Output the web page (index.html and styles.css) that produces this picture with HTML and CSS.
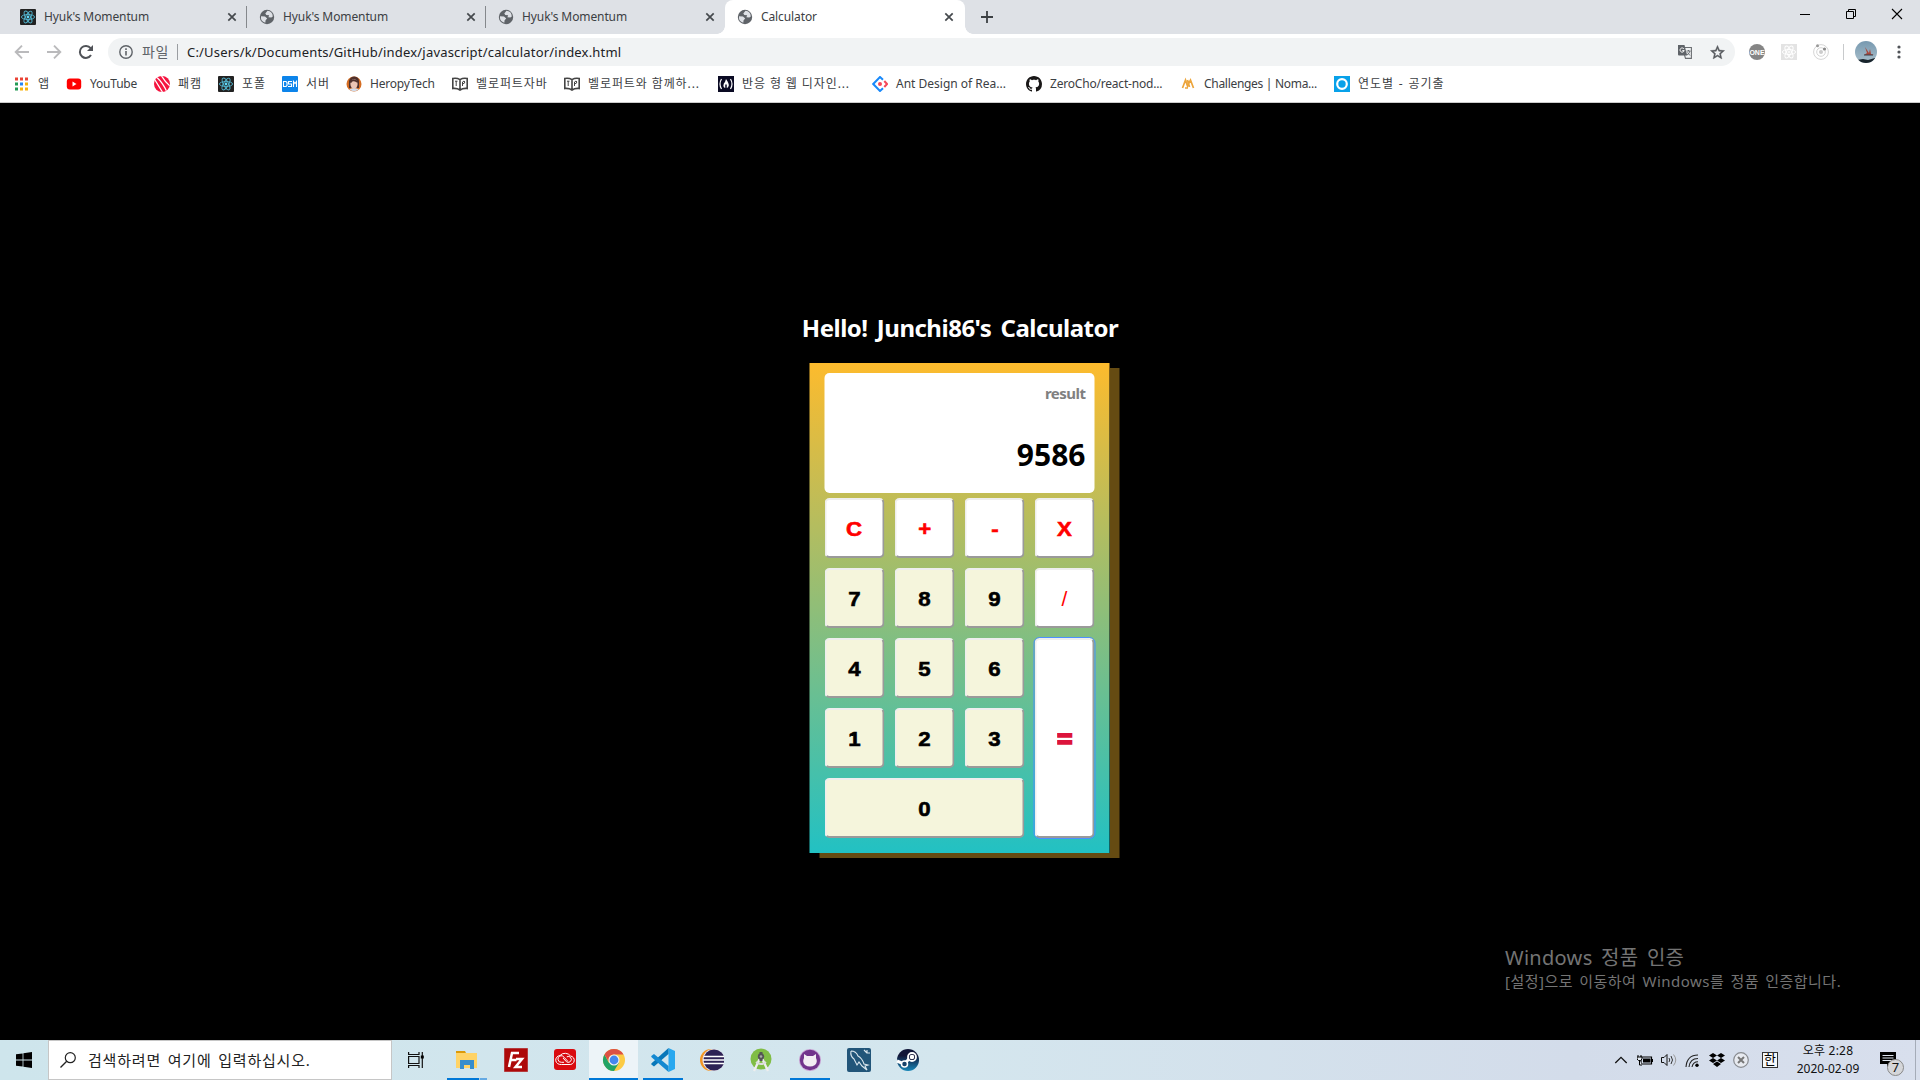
FILE: index.html
```html
<!DOCTYPE html>
<html lang="ko">
<head>
<meta charset="utf-8">
<title>Calculator</title>
<link rel="stylesheet" href="styles.css">
</head>
<body>
<svg class="defs" aria-hidden="true">
  <symbol id="globe" viewBox="0 0 16 16"><circle cx="8" cy="8" r="7.200" fill="#5f6368"/><path d="M8.500 1.800 6.300 4.400 7.300 6 10.200 6.200 9.400 8.200 12.300 8.600 13.800 7.400A6 6 0 0 0 8.500 1.800ZM2 7.200 6 7.500 8.200 9.600 6.600 11.200 6.300 13.700A6 6 0 0 1 2 7.200Z" fill="#dee1e6"/></symbol>
  <symbol id="close" viewBox="0 0 10 10"><path d="M1.300 1.300 8.700 8.700M8.700 1.300 1.300 8.700" stroke="#45494d" stroke-width="1.700"/></symbol>
  <symbol id="react" viewBox="0 0 16 16"><rect width="16" height="16" rx="1" fill="#222"/><g fill="none" stroke="#52b5cf" stroke-width=".9"><ellipse cx="8" cy="8" rx="6.600" ry="2.500"/><ellipse cx="8" cy="8" rx="6.600" ry="2.500" transform="rotate(60 8 8)"/><ellipse cx="8" cy="8" rx="6.600" ry="2.500" transform="rotate(120 8 8)"/></g><circle cx="8" cy="8" r="1.400" fill="#61dafb"/></symbol>
  <symbol id="book" viewBox="0 0 16 16"><path d="M.8 2.500Q5 1.800 8 3.600 11 1.800 15.200 2.500V12.500Q11 12 8 14 5 12 .8 12.500ZM8 3.600V14" fill="none" stroke="#444" stroke-width="1.600"/><path d="M3 5.200h2.500M4.200 5v5M10.500 10V6q2-2 2.300 0 0 1.600-2 1.800" fill="none" stroke="#444"/></symbol>
</svg>

<header class="tabs">
  <div class="tab"><svg class="fav"><use href="#react"/></svg><span class="tab-title">Hyuk's Momentum</span><svg class="x"><use href="#close"/></svg></div>
  <div class="tab"><svg class="fav"><use href="#globe"/></svg><span class="tab-title">Hyuk's Momentum</span><svg class="x"><use href="#close"/></svg></div>
  <div class="tab last"><svg class="fav"><use href="#globe"/></svg><span class="tab-title">Hyuk's Momentum</span><svg class="x"><use href="#close"/></svg></div>
  <div class="tab active"><svg class="fav"><use href="#globe"/></svg><span class="tab-title">Calculator</span><svg class="x"><use href="#close"/></svg></div>
  <svg class="plus" viewBox="0 0 12 12"><path d="M6 0V12M0 6H12" stroke="#3c4043" stroke-width="1.800"/></svg>
  <div class="window-buttons">
    <svg viewBox="0 0 12 12"><path d="M1 6.500H11" stroke="#000"/></svg>
    <svg viewBox="0 0 12 12"><path d="M1.500 3.500H8.500V10.500H1.500ZM3.500 3.500V1.500H10.500V8.500H8.500" fill="none" stroke="#000"/></svg>
    <svg viewBox="0 0 12 12"><path d="M1 1 11 11M11 1 1 11" stroke="#000" stroke-width="1.100"/></svg>
  </div>
</header>

<nav class="toolbar">
  <div class="nav-icons">
    <svg viewBox="0 0 16 16"><path d="M15 8H2M8 1.700 1.700 8 8 14.300" fill="none" stroke="#bababc" stroke-width="1.900"/></svg>
    <svg viewBox="0 0 16 16"><path d="M1 8H14M8 1.700 14.300 8 8 14.300" fill="none" stroke="#bababc" stroke-width="1.900"/></svg>
    <svg viewBox="0 0 16 16"><path d="M13 11A6 6 0 1 1 12.600 4.200" fill="none" stroke="#505358" stroke-width="2"/><path d="M15 1V7H9Z" fill="#505358"/></svg>
  </div>
  <div class="omnibox">
    <svg class="info" viewBox="0 0 14 14"><circle cx="7" cy="7" r="6.200" fill="none" stroke="#5f6368" stroke-width="1.400"/><path d="M7 6V10.500M7 3.300V4.900" stroke="#5f6368" stroke-width="1.600"/></svg>
    <span class="scheme">파일</span>
    <span class="url">C:/Users/k/Documents/GitHub/index/javascript/calculator/index.html</span>
    <svg class="translate" viewBox="0 0 14 14"><path d="M5 2.500H13.400V13.400H7.500L6.500 10" fill="none" stroke="#6b6e72" stroke-width="1.100"/><path d="M0 0H6.500L9.200 10.500H1Q0 10.500 0 9.500Z" fill="#5f6368"/><path d="M6 4A2.100 2.100 0 1 0 6.200 5.600H4.300" fill="none" stroke="#fff"/><path d="M8.500 6H12.500M10.500 5V6M12 6Q11 9 9 10M9.500 7.500 12 10.500" fill="none" stroke="#5f6368" stroke-width=".9"/></svg>
    <svg class="star" viewBox="0 0 24 24"><path d="M22 9.240l-7.190-.62L12 2 9.190 8.630 2 9.240l5.460 4.730L5.820 21 12 17.270 18.180 21l-1.630-7.030L22 9.240zM12 15.400l-3.760 2.270 1-4.280-3.320-2.880 4.380-.38L12 6.100l1.710 4.040 4.380.38-3.320 2.880 1 4.280L12 15.400z" fill="#55585c" stroke="#55585c" stroke-width=".6"/></svg>
  </div>
  <div class="extensions">
    <svg viewBox="0 0 16 16"><circle cx="8" cy="8" r="8" fill="#858585"/><text x="8" y="11" text-anchor="middle" class="one">ONE</text></svg>
    <svg viewBox="0 0 16 16"><rect width="16" height="16" fill="#e3e3e3"/><g fill="none" stroke="#fff" stroke-width="1"><ellipse cx="8" cy="8" rx="6.600" ry="2.500"/><ellipse cx="8" cy="8" rx="6.600" ry="2.500" transform="rotate(60 8 8)"/><ellipse cx="8" cy="8" rx="6.600" ry="2.500" transform="rotate(120 8 8)"/><circle cx="8" cy="8" r="1"/></g></svg>
    <svg viewBox="0 0 16 16"><g fill="none" stroke="#d5d5d5"><circle cx="8" cy="8" r="7.400"/><circle cx="8" cy="8" r="4.300"/></g><circle cx="8" cy="8" r="2" fill="#ccc"/><circle cx="4.500" cy="1.800" r="1.500" fill="#999"/><circle cx="11.500" cy="5" r="1.600" fill="#888"/></svg>
  </div>
  <svg class="avatar" viewBox="0 0 22 22"><defs><clipPath id="round"><circle cx="11" cy="11" r="11"/></clipPath><linearGradient id="sky" x2="0" y2="1"><stop offset="0" stop-color="#7799b0"/><stop offset="1" stop-color="#a9bfcb"/></linearGradient></defs><g clip-path="url(#round)"><rect width="22" height="22" fill="url(#sky)"/><path d="M10 6 14 12 15 8 16 13 19 14H9L12 12Z" fill="#a8463b"/><path d="M9 14H18" stroke="#39414a"/><path d="M2 19 8 18 13 19 20 17V22H2Z" fill="#18232b"/></g></svg>
  <svg class="dots" viewBox="0 0 4 14"><g fill="#505358"><circle cx="2" cy="2" r="1.600"/><circle cx="2" cy="7" r="1.600"/><circle cx="2" cy="12" r="1.600"/></g></svg>
</nav>

<nav class="bookmarks">
  <a><svg viewBox="0 0 16 16"><g fill="#ea4335"><path d="M1 1.500h3v3H1zM6 1.500h3v3H6zM11 1.500h3v3h-3z"/></g><path d="M1 6.500h3v3H1zM1 11.500h3v3H1z" fill="#249a55"/><path d="M6 6.500h3v3H6z" fill="#2585f5"/><path d="M11 6.500h3v3h-3zM6 11.500h3v3H6zM11 11.500h3v3h-3z" fill="#f8b20b"/></svg><span class="ko">앱</span></a>
  <a><svg viewBox="0 0 16 16"><rect x=".8" y="2.500" width="14.400" height="11" rx="3" fill="#f00"/><path d="M6.500 5.500V10.500L10.500 8Z" fill="#fff"/></svg><span class="en">YouTube</span></a>
  <a><svg viewBox="0 0 16 16"><defs><clipPath id="disc"><circle cx="8" cy="8" r="8"/></clipPath></defs><circle cx="8" cy="8" r="8" fill="#f5143f"/><path d="M1 4 9 17M3 1.500Q9 7 13 16M7 -1Q11 6 16 10" fill="none" stroke="#fff" stroke-width="1.300" clip-path="url(#disc)"/></svg><span class="ko">패캠</span></a>
  <a><svg><use href="#react"/></svg><span class="ko">포폴</span></a>
  <a><svg viewBox="0 0 16 16"><rect width="16" height="16" rx="1" fill="#0c84ea"/><path d="M1.500 5.500H4L5 6.500V9.500L4 10.500H1.500ZM10 5.500H6.500V8H9.500V10.500H6M11.500 11V5.500L13 7.500 14.500 5.500V11" fill="none" stroke="#fff" stroke-width="1.100"/></svg><span class="ko">서버</span></a>
  <a><svg viewBox="0 0 16 16"><circle cx="8" cy="8" r="7.500" fill="#d56d22"/><path d="M3 12V5Q4 .5 8.500.5 13 1 13 5V12Z" fill="#50312c"/><ellipse cx="8" cy="8" rx="3.600" ry="4.800" fill="#ecc5b5"/><path d="M3 13.500Q8 11 13 13.500 8 17 3 13.500" fill="#d2dceb"/><path d="M4.300 6.500Q6 2.500 11.800 6" stroke="#50312c" stroke-width="2" fill="none"/></svg><span class="en">HeropyTech</span></a>
  <a><svg><use href="#book"/></svg><span class="ko">벨로퍼트자바</span></a>
  <a><svg><use href="#book"/></svg><span class="ko">벨로퍼트와 함께하...</span></a>
  <a><svg viewBox="0 0 16 16"><rect width="16" height="16" fill="#0a0a23"/><path d="M3.500 3Q.5 8 3.500 13M12.500 3Q15.500 8 12.500 13" fill="none" stroke="#fff" stroke-width="1.200"/><path d="M8 3Q11 7 10.800 9.500 10.500 12 8 12 5.400 12 5.400 9.500 5.500 7 7 6Z" fill="#fff"/><path d="M8 8.500V12" stroke="#0a0a23" stroke-width="1.500"/></svg><span class="ko">반응 형 웹 디자인...</span></a>
  <a><svg viewBox="0 0 16 16"><path d="M11 3.800 8 1 1.200 8 8 15 11 12.200" fill="none" stroke="#1989fa" stroke-width="2"/><path d="M12.300 5 15 8 12.300 11" fill="none" stroke="#f5495a" stroke-width="2"/><circle cx="8" cy="8" r="2" fill="#f5495a"/></svg><span class="en ant">Ant Design of Rea...</span></a>
  <a><svg viewBox="0 0 16 16"><path fill="#191717" d="M8 0C3.580 0 0 3.580 0 8c0 3.540 2.290 6.530 5.470 7.590.4.070.55-.17.55-.38 0-.19-.01-.82-.01-1.490-2.010.37-2.530-.49-2.690-.94-.09-.23-.48-.94-.82-1.130-.28-.15-.68-.52-.01-.53.63-.01 1.080.58 1.230.82.72 1.210 1.870.87 2.330.66.07-.52.28-.87.51-1.070-1.780-.2-3.640-.89-3.640-3.950 0-.87.31-1.590.82-2.150-.08-.2-.36-1.020.08-2.120 0 0 .67-.21 2.200.82.64-.18 1.320-.27 2-.27s1.360.09 2 .27c1.530-1.040 2.200-.82 2.200-.82.44 1.100.16 1.920.08 2.120.51.56.82 1.270.82 2.150 0 3.070-1.870 3.750-3.650 3.950.29.25.54.73.54 1.480 0 1.070-.01 1.930-.01 2.200 0 .21.15.46.55.38A8.010 8.010 0 0 0 16 8c0-4.420-3.580-8-8-8z"/></svg><span class="en">ZeroCho/react-nod...</span></a>
  <a><svg viewBox="0 0 16 16"><path d="M2.500 12 5.500 4 7.500 10 10.500 4 13.500 12M7.500 4 9.500 11M5 12H8" fill="none" stroke="#eca53c" stroke-width="1.700"/></svg><span class="en noma">Challenges | Noma...</span></a>
  <a><svg viewBox="0 0 16 16"><rect width="16" height="16" fill="#08a1e9"/><circle cx="8" cy="8" r="4.800" fill="none" stroke="#fff" stroke-width="2.200"/></svg><span class="ko year">연도별 - 공기출</span></a>
</nav>

<main class="page">
  <h1 class="greeting">Hello! Junchi86's Calculator</h1>
  <section class="calculator">
    <div class="display"><span class="label">result</span><span class="value">9586</span></div>
    <div class="keys">
      <button class="key op"><span>C</span></button><button class="key op"><span>+</span></button><button class="key op"><span>-</span></button><button class="key op"><span>X</span></button>
      <button class="key"><span>7</span></button><button class="key"><span>8</span></button><button class="key"><span>9</span></button><button class="key op slash"><span>/</span></button>
      <button class="key"><span>4</span></button><button class="key"><span>5</span></button><button class="key"><span>6</span></button><button class="key op equals"><span>=</span></button>
      <button class="key"><span>1</span></button><button class="key"><span>2</span></button><button class="key"><span>3</span></button>
      <button class="key zero"><span>0</span></button>
    </div>
  </section>
  <aside class="activation"><p class="act-title">Windows 정품 인증</p><p class="act-text">[설정]으로 이동하여 Windows를 정품 인증합니다.</p></aside>
</main>

<footer class="taskbar">
  <div class="start"><svg viewBox="0 0 16 16"><path d="M0 2.300 6.600 1.400V7.600H0ZM7.400 1.300 16 0V7.600H7.400ZM0 8.400H6.600V14.600L0 13.700ZM7.400 8.400H16V16L7.400 14.700Z"/></svg></div>
  <div class="search"><svg viewBox="0 0 16 16"><circle cx="10.300" cy="5.700" r="5" fill="none" stroke="#222" stroke-width="1.200"/><path d="M6.700 9.300.5 15.500" stroke="#222" stroke-width="1.300"/></svg><span>검색하려면 여기에 입력하십시오.</span></div>
  <div class="taskview"><svg viewBox="0 0 16 16"><g fill="none" stroke="#111" stroke-width="1.200"><path d="M.6 4.500H11V11.500H.6ZM.6 0V2.500H11V0M.6 16V13.500H11V16M14.300 0V16"/></g><path d="M12.800 3.500h3v3h-3z"/></svg></div>
  <div class="apps">
    <div class="app explorer"><svg viewBox="0 0 24 24"><path d="M1 3H10L11 5H1Z" fill="#dc9a09"/><path d="M1 5H22V20H1Z" fill="#ffd366"/><path d="M5 12H19V21H15V17H9V21H5Z" fill="#368dcc"/></svg></div>
    <div class="app"><svg viewBox="0 0 24 24"><rect x=".5" y=".5" width="23" height="23" fill="#ad0909" stroke="#a00" stroke-dasharray="1 1"/><path d="M5 19 8 5H15M6.500 12H12.500M12 11H18L11.500 19H18" fill="none" stroke="#fff" stroke-width="2.500"/></svg></div>
    <div class="app"><svg viewBox="0 0 24 24"><rect x="1" y="1" width="22" height="21" rx="3" fill="#d90b0f"/><g fill="none" stroke="#fff" stroke-width="1"><path d="M8.500 16.500A5 4.500 0 0 1 7 7.500 6.500 6 0 0 1 17.500 8 4.500 4.300 0 0 1 16 16.500Z"/><path d="M15 13.500 11 9.200A3.300 3.300 0 1 0 8.500 14.300H11M10 10 13.500 13.800A3 3 0 1 0 13.800 8.800"/></g></svg></div>
    <div class="app current open"><svg viewBox="0 0 24 24"><circle cx="12" cy="12" r="11" fill="#fccb45"/><path d="M12 12 7 15 2.470 6.500A11 11 0 0 0 12 23L17 14.700Z" fill="#21a366"/><path d="M12 1A11 11 0 0 1 21.530 6.500H12A5.500 5.500 0 0 0 7.200 14.700L2.470 6.500A11 11 0 0 1 12 1" fill="#dd5144"/><circle cx="12" cy="12" r="5.500" fill="#f3f3f3"/><circle cx="12" cy="12" r="4.400" fill="#4587ee"/></svg></div>
    <div class="app open"><svg viewBox="0 0 24 24"><path d="M17.500 0 24 3V21L17.500 24V0Z" fill="#29a8ef"/><path d="M17.500 0V6L3 18.500 .3 16.500V15.500Z" fill="#0877b9"/><path d="M17.500 24V18L3 6 .3 8V9Z" fill="#1489d1"/></svg></div>
    <div class="app"><svg viewBox="0 0 24 24"><circle cx="11" cy="12" r="11" fill="#f49623"/><circle cx="13.500" cy="12" r="11" fill="#e9e2ef"/><circle cx="14" cy="12" r="10.500" fill="#2d2255"/><path d="M4 8.500H24M3 12H24M4 15.500H24" stroke="#fff" stroke-width="1.600"/></svg></div>
    <div class="app"><svg viewBox="0 0 24 24"><circle cx="12" cy="11" r="10.500" fill="#80bd45"/><path d="M12 8 5 23M12 8 19 23" stroke="#eee" stroke-width="2.300"/><path d="M7 14Q12 18 17 14" fill="none" stroke="#ddd" stroke-width="2"/><path d="M12 4V13" stroke="#555" stroke-width="3"/><circle cx="12" cy="8.500" r="3.200" fill="#555"/><circle cx="12" cy="8.500" r="1.300" fill="#aaa"/></svg></div>
    <div class="app open"><svg viewBox="0 0 24 24"><circle cx="12" cy="12" r="11" fill="#c9a7d5"/><circle cx="12" cy="12" r="10.200" fill="#71348c"/><path d="M6 6 9 8H15L18 6V10Q20 14 17 17 12 20 7 17 4 14 6 10Z" fill="#f2edf3"/></svg></div>
    <div class="app"><svg viewBox="0 0 24 24"><rect width="24" height="24" rx="2" fill="#225579"/><path d="M4 3Q9 3 11 8 15 10 17 16L21 17 18 18 20 22 15 18 12 14 10 17 7 11Q3 8 4 3M17 2 20 5M20 2V5H23" fill="none" stroke="#dce8ef" stroke-width="1.100"/></svg></div>
    <div class="app"><svg viewBox="0 0 24 24"><defs><linearGradient id="steam" x2="0" y2="1"><stop offset=".3" stop-color="#111638"/><stop offset="1" stop-color="#1887b8"/></linearGradient></defs><circle cx="12" cy="12" r="11" fill="url(#steam)"/><path d="M1 13 8 16 12 12 15 8" fill="none" stroke="#fff" stroke-width="3"/><circle cx="16" cy="9" r="4" fill="#111638" stroke="#fff" stroke-width="1.800"/><circle cx="16" cy="9" r="2.300" fill="#fff"/><circle cx="8.500" cy="16" r="3" fill="#17426a" stroke="#fff" stroke-width="1.500"/></svg></div>
  </div>
  <div class="tray">
    <svg viewBox="0 0 16 16"><path d="M2.300 11 8 5.300 13.700 11" fill="none" stroke="#111" stroke-width="1.300"/></svg>
    <svg viewBox="0 0 16 16"><path d="M4 5H14.500V12H4ZM15.500 7V10" fill="none" stroke="#000" stroke-width="1.200"/><path d="M6 6.500H13.500V10.500H6Z"/><path d="M1 3V5M4 3V5M0 5H5V7L3.500 8.500H1.500L0 7ZM2.500 8V13H5" fill="#e5ebf2" stroke="#000"/></svg>
    <svg viewBox="0 0 16 16"><path d="M.5 5.500H3L6 2.500V13.500L3 10.500H.5Z" fill="none" stroke="#111"/><path d="M8 6Q9.500 8 8 10M10 4Q13 8 10 12" fill="none" stroke="#333"/><path d="M12.500 2.500Q17 8 12.500 13.500" fill="none" stroke="#999"/></svg>
    <svg viewBox="0 0 16 16"><path d="M1 15Q2 3 13 3M4 15Q5 6.500 13 6.500M7 15Q8 9.800 13 9.800" fill="none" stroke="#222" stroke-width="1.100"/><circle cx="12" cy="13.300" r="1.700"/></svg>
    <svg viewBox="0 0 16 16"><path d="M4 1 8 3.500 4 6 0 3.500ZM12 1 16 3.500 12 6 8 3.500ZM4 6 8 8.500 4 11 0 8.500ZM12 6 16 8.500 12 11 8 8.500ZM8 9.500 12 12 8 15 4 12Z"/></svg>
    <svg viewBox="0 0 16 16"><circle cx="8" cy="8" r="7.300" fill="#e7eaf0" stroke="#888b90" stroke-width="1.200"/><path d="M5 5 11 11M11 5 5 11" stroke="#777" stroke-width="2"/></svg>
  </div>
  <span class="ime">한</span>
  <div class="clock"><span class="time">오후 2:28</span><span>2020-02-09</span></div>
  <div class="notice"><svg viewBox="0 0 16 16"><path d="M0 0H16V12H11L7 15V12H0Z"/><path d="M2.500 3.500H13.500M2.500 6H13.500M2.500 8.500H13.500" stroke="#dce3ed"/></svg><span class="badge">7</span></div>
</footer>
</body>
</html>
```
FILE: styles.css
```css
* { box-sizing: border-box; }
body { margin: 0; width: 1920px; height: 1080px; overflow: hidden; display: flex; flex-direction: column; background: #000; font-family: "Noto Sans", "Noto Sans CJK KR", sans-serif; font-size: 12px; color: #3c4043; white-space: nowrap; }
svg { display: block; flex: none; }
.defs { display: none; }

.tabs { height: 34px; flex: none; display: flex; align-items: center; padding-left: 8px; background: #dee1e6; }
.tab { width: 239px; height: 34px; display: flex; align-items: center; padding: 0 9px 0 12px; border-right: 1px solid transparent; border-image: linear-gradient(transparent 7px, #85888c 7px 27px, transparent 27px) 1; }
.tab.last { border-image: none; }
.tab.active { position: relative; background: #fff; border: 0; border-radius: 8px 8px 0 0; width: 240px; padding: 0 11px 0 12px; }
.tab.active::before, .tab.active::after { content: ""; position: absolute; bottom: 0; width: 8px; height: 8px; }
.tab.active::before { left: -8px; background: radial-gradient(circle at 0 0, transparent 7.500px, #fff 8px); }
.tab.active::after { right: -8px; background: radial-gradient(circle at 100% 0, transparent 7.500px, #fff 8px); }
.fav { width: 16px; height: 16px; }
.tab-title { flex: 1; padding-left: 8px; line-height: 16px; letter-spacing: -0.1px; }
.x { width: 10px; height: 10px; }
.plus { width: 12px; height: 12px; margin-left: 16px; }
.window-buttons { margin: -6px 17px 0 auto; display: flex; gap: 34px; }
.window-buttons svg { width: 12px; height: 12px; }

.toolbar { height: 36px; flex: none; display: flex; align-items: center; background: #fff; padding: 0 19px 0 14px; }
.nav-icons { display: flex; gap: 16px; width: 94px; }
.nav-icons svg { width: 16px; height: 16px; }
.omnibox { width: 1627px; height: 28px; border-radius: 14px; background: #f1f3f4; display: flex; align-items: center; padding: 0 9px 0 11px; font-size: 13px; }
.info { width: 14px; height: 14px; }
.scheme { margin-left: 9px; width: 36px; height: 16px; line-height: 15px; border-right: 1px solid #9a9da1; color: #5f6368; font-size: 14px; letter-spacing: 0.7px; }
.url { margin-left: 9px; color: #202124; letter-spacing: 0.190px; }
.translate { width: 14px; height: 14px; margin-left: auto; }
.star { width: 17px; height: 17px; margin-left: 17px; }
.extensions { display: flex; gap: 16px; padding: 0 14px; margin-right: 11px; border-right: 1px solid #c8cacc; }
.extensions svg { width: 16px; height: 16px; }
.one { font: bold 7px "Liberation Sans", sans-serif; fill: #fff; }
.avatar { width: 22px; height: 22px; }
.dots { width: 4px; height: 14px; margin-left: auto; }

.bookmarks { height: 33px; flex: none; background: #fff; border-bottom: 1px solid #ccc; display: grid; grid-template-columns: 52px 88px 64px 64px 64px 106px 112px repeat(6, 154px); padding: 0 0 5px 14px; align-items: center; }
.bookmarks a { display: flex; align-items: center; gap: 8px; line-height: 16px; }
.bookmarks svg { width: 16px; height: 16px; }
.ko { letter-spacing: 0.9px; }
.en { letter-spacing: -0.2px; }
.ant { letter-spacing: 0; }
.noma { letter-spacing: -0.3px; }
.year { word-spacing: 1px; }

.page { flex: 1; position: relative; padding-top: 205px; display: flex; flex-direction: column; align-items: center; }
.greeting { margin: 0; color: #fff; font: bold 24px/40px "Noto Sans", sans-serif; height: 55px; letter-spacing: -0.5px; word-spacing: 3.500px; }
.calculator { width: 300px; height: 490px; padding: 10px 15px; background: linear-gradient(0deg, #22c1c3, #fdbb2d); box-shadow: 10px 5px 0 rgba(253, 187, 45, .4); transform: translateX(-0.5px); }
.display { height: 120px; background: #fff; border-radius: 5px; padding: 8px 9px; display: flex; flex-direction: column; align-items: flex-end; font-weight: bold; }
.label { color: gray; font-size: 15px; line-height: 24px; letter-spacing: -0.5px; }
.value { color: #000; font-size: 30px; line-height: 40px; margin-top: 30px; }
.keys { display: grid; grid-template-columns: repeat(4, 60px); grid-template-rows: repeat(5, 60px); gap: 10px; margin-top: 5px; }
.key { padding: 2px 0 0; background: beige; border: 2px outset #eee; border-radius: 5px; color: #000; font: bold 21px "Liberation Sans", sans-serif; }
.key span { display: inline-block; transform: scaleX(1.060); -webkit-text-stroke: 0.6px currentColor; }
.op { background: #fff; color: red; }
.key.slash { font-weight: normal; }
.key.slash span { -webkit-text-stroke: 0; transform: none; }
.key.equals { grid-column: 4; grid-row: 3 / span 3; color: crimson; font-size: 25px; outline: 1px solid #4d90fe; }
.equals span { -webkit-text-stroke: 1.800px crimson; }
.zero { grid-column: 1 / span 3; }
.activation { position: absolute; left: 1505px; top: 840px; color: #747474; }
.activation p { margin: 0; }
.act-title { font-size: 20px; line-height: 30px; letter-spacing: 0.3px; word-spacing: 3px; }
.act-text { font-size: 15px; line-height: 16px; letter-spacing: 0.5px; word-spacing: 1.700px; }

.taskbar { height: 40px; flex: none; display: flex; align-items: center; background: linear-gradient(90deg, #cee5ec, #d4e6ee 50%, #d3dcea 82%, #d8dfed); color: #111; }
.start { width: 48px; padding-left: 16px; }
.start svg, .search svg, .taskview svg { width: 16px; height: 16px; }
.search { width: 344px; height: 40px; background: #fff; border: 1px solid #c6c6c6; display: flex; align-items: center; gap: 12px; padding-left: 11px; font-size: 15px; color: #222; letter-spacing: 0.8px; word-spacing: 2px; }
.search span { padding-bottom: 2px; }
.taskview { width: 50px; padding-left: 16px; }
.apps { display: flex; }
.app { width: 49px; height: 40px; display: flex; align-items: center; justify-content: center; }
.app svg { width: 24px; height: 24px; }
.open { background: linear-gradient(#0078d7, #0078d7) center bottom / 40px 2px no-repeat; }
.current { background: linear-gradient(#0078d7, #0078d7) center bottom / 100% 2px no-repeat, #edf4f8; }
.explorer { background: linear-gradient(90deg, #0078d7 32px, #b0cde3 32px 33px, #65aae3 33px) 5px bottom / 40px 2px no-repeat; }
.tray { display: flex; gap: 8px; margin-left: auto; }
.tray svg { width: 16px; height: 16px; }
.ime { width: 16px; height: 16px; margin-left: 13px; border: 1px solid #333; background: #f5f8fa; font-size: 13px; line-height: 13px; text-align: center; color: #000; }
.clock { width: 100px; display: flex; flex-direction: column; text-align: center; line-height: 18px; }
.time { letter-spacing: 0.2px; }
.notice { width: 38px; height: 40px; padding: 12px 0 0 2px; border-right: 1px solid #a5acb8; margin-right: 4px; position: relative; }
.notice svg { width: 16px; height: 16px; }
.badge { position: absolute; left: 9px; top: 19px; width: 17px; height: 17px; border: 1px solid #888; border-radius: 50%; background: #d5d6d9; text-align: center; line-height: 15px; font-size: 13px; }
```
